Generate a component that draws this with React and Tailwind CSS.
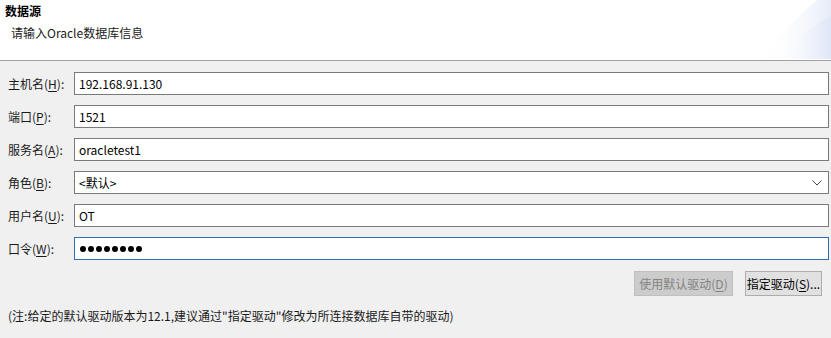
import React from 'react'

const font = { fontFamily: '"Noto Sans CJK SC", "Noto Sans", sans-serif' }

function Label({ text, k }) {
  return (
    <div className="text-[12px] text-[#1a1a1a] pl-2 leading-none">
      {text}(<span className="underline underline-offset-2">{k}</span>):
    </div>
  )
}

function Box({ children, focus }) {
  return (
    <div className={`h-[23px] bg-white border flex items-center pl-[4px] pr-2 text-[12px] text-black ${focus ? 'border-[#2e70b5]' : 'border-[#7a7a7a]'}`}>
      {children}
    </div>
  )
}

function Corner() {
  return (
    <svg width="70" height="59" viewBox="0 0 70 59" className="absolute right-0 top-0">
      <defs>
        <linearGradient id="g1" x1="0" y1="0" x2="1" y2="0">
          <stop offset="0" stopColor="#ffffff" stopOpacity="0" />
          <stop offset="1" stopColor="#e6ecf8" />
        </linearGradient>
        <linearGradient id="g2" x1="0" y1="0" x2="1" y2="0">
          <stop offset="0" stopColor="#ffffff" stopOpacity="0" />
          <stop offset="1" stopColor="#dfe6f6" />
        </linearGradient>
      </defs>
      <path d="M0 59 C20 35 40 12 56 0 L70 0 L70 59 Z" fill="url(#g1)" />
      <path d="M20 59 C35 40 52 24 70 16 L70 59 Z" fill="url(#g2)" />
    </svg>
  )
}

export default function App() {
  return (
    <div className="w-[831px] h-[338px] bg-[#f0f0f0] overflow-hidden" style={font}>
      <div className="relative h-[61px] bg-white border-b border-[#a0a0a0]">
        <Corner />
        <div className="pl-[5px] pt-[3px] text-[12px] leading-[16px] font-bold text-black">数据源</div>
        <div className="pl-[11px] pt-[6px] text-[12px] leading-[16px] text-[#1a1a1a]">请输入Oracle数据库信息</div>
      </div>

      <div className="grid grid-cols-[74px_1fr] items-center gap-y-[10px] pt-[11px] pr-[2px]">
        <Label text="主机名" k="H" />
        <Box>192.168.91.130</Box>
        <Label text="端口" k="P" />
        <Box>1521</Box>
        <Label text="服务名" k="A" />
        <Box>oracletest1</Box>
        <Label text="角色" k="B" />
        <Box>
          <span className="flex-1">&lt;默认&gt;</span>
          <svg width="10" height="6" viewBox="0 0 10 6" className="mr-[-2px]">
            <path d="M0.5 0.5 L5 5 L9.5 0.5" fill="none" stroke="#444" strokeWidth="1" />
          </svg>
        </Box>
        <Label text="用户名" k="U" />
        <Box>OT</Box>
        <Label text="口令" k="W" />
        <Box focus>
          <div className="flex gap-[2px] pl-[1px]">
            {Array.from({ length: 8 }).map((_, i) => (
              <span key={i} className="w-[6px] h-[6px] rounded-full bg-black" />
            ))}
          </div>
        </Box>
      </div>

      <div className="flex justify-end gap-[12px] pr-[9px] pt-[11px]">
        <button className="h-[25px] w-[99px] bg-[#cccccc] border border-[#bfbfbf] text-[12px] text-[#838383]">
          使用默认驱动(<span className="underline underline-offset-2">D</span>)
        </button>
        <button className="h-[25px] w-[77px] bg-[#e1e1e1] border border-[#adadad] text-[12px] text-black">
          指定驱动(<span className="underline underline-offset-2">S</span>)...
        </button>
      </div>

      <div className="pl-[8px] pt-[11px] text-[12px] text-[#1a1a1a]">
        (注:给定的默认驱动版本为12.1,建议通过"指定驱动"修改为所连接数据库自带的驱动)
      </div>
    </div>
  )
}
